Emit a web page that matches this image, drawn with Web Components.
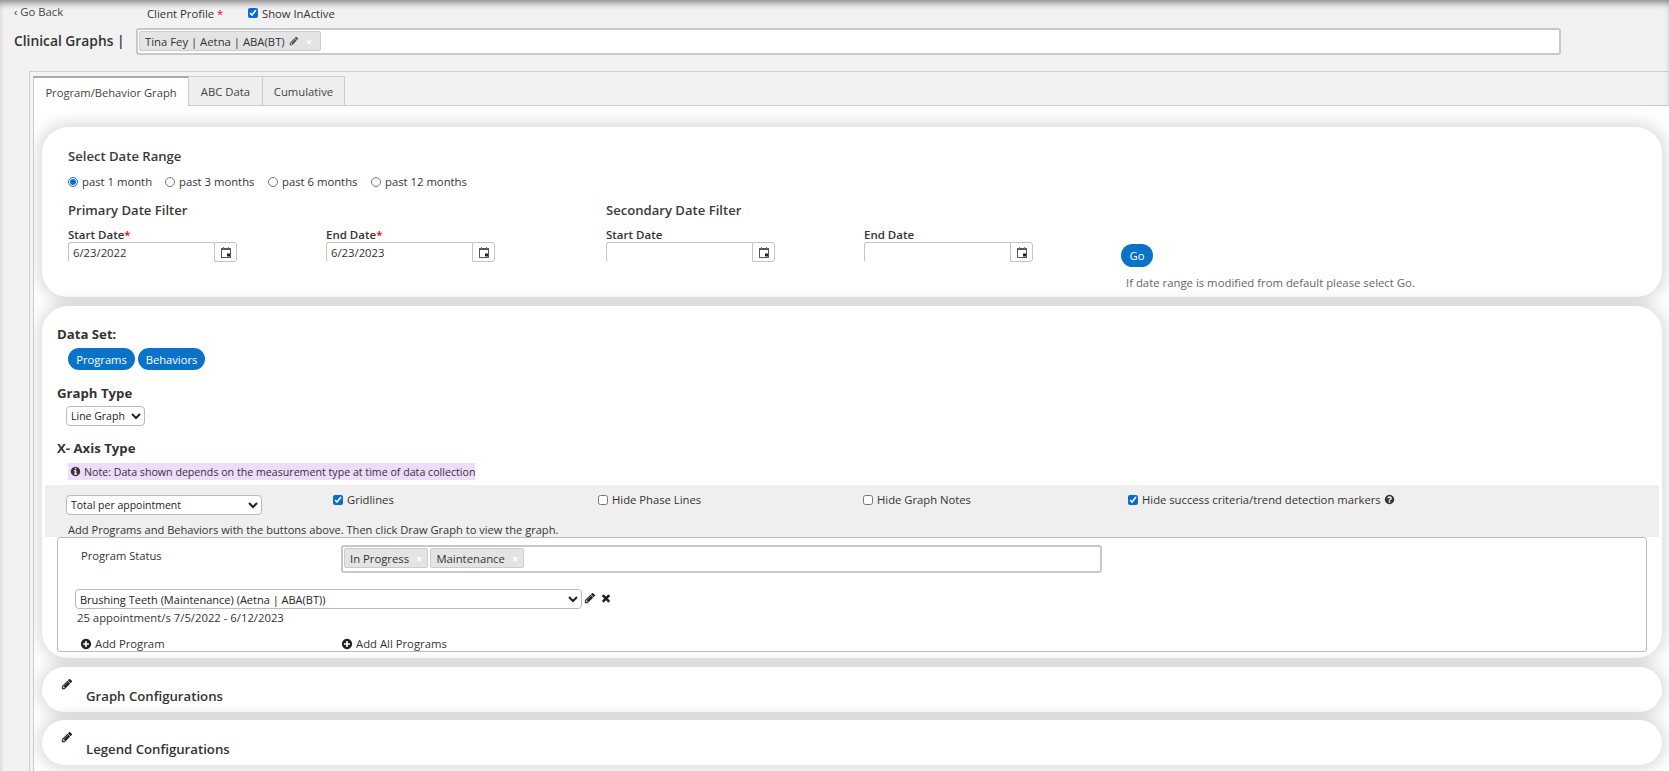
<!DOCTYPE html>
<html><head><meta charset="utf-8">
<style>
html,body{margin:0;height:771px;overflow:hidden}
body{background:#f2f2f2;font-family:"Open Sans","Liberation Sans",sans-serif;color:#333;font-size:11.3px;box-shadow:inset 0 6px 7px -3px rgba(0,0,0,.45)}
</style></head><body>
<clinical-page></clinical-page>
<script>
const P={
pencil:'M491 1536l91-91-235-235-91 91v107h128v128h107zm523-928q0-22-22-22-10 0-17 7l-542 542q-7 7-7 17 0 22 22 22 10 0 17-7l542-542q7-7 7-17zm-54-192l416 416-832 832h-416v-416zm683 96q0 53-37 90l-166 166-416-416 166-165q36-38 90-38 53 0 91 38l235 234q37 39 37 91z',
times:'M1490 1322q0 40-28 68l-136 136q-28 28-68 28t-68-28l-294-294-294 294q-28 28-68 28t-68-28l-136-136q-28-28-28-68t28-68l294-294-294-294q-28-28-28-68t28-68l136-136q28-28 68-28t68 28l294 294 294-294q28-28 68-28t68 28l136 136q28 28 28 68t-28 68l-294 294 294 294q28 28 28 68z',
plus:'M1344 960v-128q0-26-19-45t-45-19h-256v-256q0-26-19-45t-45-19h-128q-26 0-45 19t-19 45v256h-256q-26 0-45 19t-19 45v128q0 26 19 45t45 19h256v256q0 26 19 45t45 19h128q26 0 45-19t19-45v-256h256q26 0 45-19t19-45zm320-64q0 209-103 385.5t-279.5 279.5-385.5 103-385.5-103-279.5-279.5-103-385.5 103-385.5 279.5-279.5 385.5-103 385.5 103 279.5 279.5 103 385.5z',
info:'M1152 1376v-160q0-14-9-23t-23-9h-96v-512q0-14-9-23t-23-9h-320q-14 0-23 9t-9 23v160q0 14 9 23t23 9h96v320h-96q-14 0-23 9t-9 23v160q0 14 9 23t23 9h448q14 0 23-9t9-23zm-128-896v-160q0-14-9-23t-23-9h-192q-14 0-23 9t-9 23v160q0 14 9 23t23 9h192q14 0 23-9t9-23zm640 416q0 209-103 385.5t-279.5 279.5-385.5 103-385.5-103-279.5-279.5-103-385.5 103-385.5 279.5-279.5 385.5-103 385.5 103 279.5 279.5 103 385.5z',
question:'M1024 1376v-192q0-14-9-23t-23-9h-192q-14 0-23 9t-9 23v192q0 14 9 23t23 9h192q14 0 23-9t9-23zm256-672q0-88-55.5-163t-138.5-116-170-41q-243 0-371 213-15 24 8 42l132 100q7 6 19 6 16 0 25-12 53-68 86-92 34-24 86-24 48 0 85.5 26t37.5 59q0 38-20 61t-68 45q-63 28-115.5 86.5t-52.5 125.5v36q0 14 9 23t23 9h192q14 0 23-9t9-23q0-19 21.5-49.5t54.5-49.5q32-18 49-28.5t46-35 44.5-48 28-60.5 12.5-81zm384 192q0 209-103 385.5t-279.5 279.5-385.5 103-385.5-103-279.5-279.5-103-385.5 103-385.5 279.5-279.5 385.5-103 385.5 103 279.5 279.5 103 385.5z'
};
class El extends HTMLElement{
  constructor(){super();this.attachShadow({mode:'open'});}
  connectedCallback(){this.shadowRoot.innerHTML=this.render();}
  a(n,d=''){return this.hasAttribute(n)?this.getAttribute(n):d;}
}
function def(n,f){customElements.define(n,class extends El{render(){return f(this);}});}

def('fa-icon',e=>`<style>:host{display:inline-flex;flex:none;color:inherit}svg{display:block}</style>
<svg width="${e.a('size',11)}" height="${e.a('size',11)}" viewBox="0 0 1792 1792" fill="currentColor"><path d="${P[e.a('name')]}"/></svg>`);

def('cal-icon',()=>`<style>:host{display:block}svg{display:block}</style>
<svg width="12" height="12" viewBox="0 0 12 12"><rect x="1.5" y="2.5" width="9" height="9" fill="#fff" stroke="#555"/><rect x="1" y="2" width="10" height="2" fill="#555"/><rect x="3" y="1" width="1" height="2" fill="#777"/><rect x="8" y="1" width="1" height="2" fill="#777"/><rect x="7" y="7.5" width="3" height="3" fill="#222"/></svg>`);

def('ui-check',e=>`<style>:host{display:inline-flex;align-items:center;font-size:11.25px;color:#333;white-space:nowrap}
input{margin:0 4px 0 0;width:10px;height:10px;accent-color:#0a6ccb}</style>
<input type="checkbox" ${e.hasAttribute('checked')?'checked':''}><slot></slot>`);

def('ui-radio',e=>`<style>:host{display:inline-flex;align-items:center;font-size:11.3px;color:#333;white-space:nowrap}
input{margin:1px 4px 0 0;width:10px;height:10px;accent-color:#0a6ccb}</style>
<input type="radio" name="r" ${e.hasAttribute('checked')?'checked':''}><slot></slot>`);

def('ui-tag',e=>`<style>:host{display:inline-flex;align-items:center;height:20px;box-sizing:border-box;border:1px solid #ccc;border-radius:2px;background:#e4e4e4;padding:0 5px;font-size:11.3px;color:#333;white-space:nowrap;gap:4px}
.x{color:#fff;font-weight:700;font-size:11px;margin-left:${e.a('xgap',3)}px}</style><slot></slot><span class="x">×</span>`);

def('pill-btn',()=>`<style>:host{display:inline-flex;align-items:center;justify-content:center;height:22px;padding:0 9px;background:#0a73c9;color:#fff;border-radius:11px;font-size:11.2px;white-space:nowrap}</style><slot></slot>`);

def('date-field',e=>`<style>:host{display:block}
label{display:block;font-weight:600;font-size:11.5px;line-height:16px;color:#333;position:relative;top:1px}
i{color:#e00;font-style:normal}
.row{display:flex;height:20px;width:169px}
.in{flex:1;border:1px solid #c4c4c4;border-bottom-color:#fff;border-right:0;border-radius:3px 0 0 3px;background:#fff;padding:2px 4px 0;font-size:11.3px;box-sizing:border-box;line-height:16px;color:#333}
.btn{width:23px;box-sizing:border-box;border:1px solid #c4c4c4;border-radius:0 3px 3px 0;background:#fff;display:flex;align-items:center;justify-content:center}</style>
<label>${e.a('label')}${e.hasAttribute('required')?'<i>*</i>':''}</label>
<div class="row"><div class="in">${e.a('value')}</div><div class="btn"><cal-icon></cal-icon></div></div>`);

def('sec-title',()=>`<style>:host{display:block;font-size:13.1px;font-weight:600;color:#3a3a3a;line-height:18px}</style><slot></slot>`);

def('ui-card',()=>`<style>:host{display:block;background:#fff;border-radius:26px;box-shadow:0 0 14px 5px rgba(0,0,0,.13);box-sizing:border-box;position:relative}</style><slot></slot>`);

def('tab-bar',()=>`<style>:host{display:flex;margin-left:3px;border-bottom:1px solid #ccc;height:29px;box-sizing:content-box}
span{display:flex;align-items:center;justify-content:center;height:29px;box-sizing:border-box;border:1px solid #ccc;border-bottom:0;font-size:11.3px;color:#444;background:#eee;margin-left:-1px}
.on{background:#fff;width:156px;height:30px;border-top:2px solid #aaa;margin-left:0;position:relative;z-index:1;font-size:11.2px}
</style><span class="on">Program/Behavior Graph</span><span style="width:75px">ABC Data</span><span style="width:83px">Cumulative</span>`);

def('app-header',()=>`<style>:host{display:block;height:71px;box-sizing:border-box;padding-top:5px}
.r1{display:flex;height:18px;align-items:flex-start;font-size:11.3px}
.back{width:147px;padding-left:14px;box-sizing:border-box;line-height:14px;font-size:11.3px;color:#444;white-space:nowrap}
.cp{width:101px;line-height:18px;white-space:nowrap}.cp i{color:#e00;font-style:normal}
ui-check{height:16px}
.r2{display:flex;align-items:center;margin-top:5px;height:27px}
h1{margin:-2px 13px 0 14px;width:109px;font-size:13.8px;font-weight:600;white-space:nowrap;color:#333}
.box{flex:none;width:1425px;height:27px;box-sizing:border-box;border:2px solid #c8c8c8;border-radius:3px;background:#fff;padding:1px;display:flex}
ui-tag{width:182px;justify-content:flex-start}
ui-tag fa-icon{color:#555}</style>
<div class="r1"><div class="back">‹ Go Back</div><div class="cp">Client Profile <i>*</i></div><ui-check checked>Show InActive</ui-check></div>
<div class="r2"><h1>Clinical Graphs |</h1><div class="box"><ui-tag xgap="3">Tina Fey | Aetna | ABA(BT) <fa-icon name="pencil" size="10"></fa-icon></ui-tag></div></div>`);

def('date-card',()=>`<style>:host{display:block}
ui-card{height:170px;padding:20px 0 0 26px}
.radios{display:flex;margin-top:8px;height:16px}
.radios ui-radio{width:103px}
.radios ui-radio:first-child{width:97px}
.grid{display:grid;grid-template-columns:258px 280px 258px 257px auto;margin-top:12px}
.t{grid-column:span 2}
.t2{grid-column:span 3}
.f{margin-top:7px}
.go{margin-top:0;position:relative}
.go pill-btn{margin-top:25px;height:23px;width:32px;padding:0;border-radius:12px}
.hint{margin:9px 0 0 5px;font-size:11.35px;color:#666;line-height:14px;white-space:nowrap}
</style><ui-card>
<sec-title>Select Date Range</sec-title>
<div class="radios"><ui-radio checked>past 1 month</ui-radio><ui-radio>past 3 months</ui-radio><ui-radio>past 6 months</ui-radio><ui-radio>past 12 months</ui-radio></div>
<div class="grid"><sec-title class="t">Primary Date Filter</sec-title><sec-title class="t2">Secondary Date Filter</sec-title>
<date-field class="f" label="Start Date" required value="6/23/2022"></date-field>
<date-field class="f" label="End Date" required value="6/23/2023"></date-field>
<date-field class="f" label="Start Date"></date-field>
<date-field class="f" label="End Date"></date-field>
<div class="go"><pill-btn>Go</pill-btn><div class="hint">If date range is modified from default please select Go.</div></div></div>
</ui-card>`);

def('data-card',()=>`<style>:host{display:block;margin-top:9px}
ui-card{height:352px;padding:19px 15px 0}
h3{margin:0;font-size:13.2px;font-weight:700;line-height:18px;color:#333}
.ind{margin-left:11px}
.btns{display:flex;gap:3px;margin-top:5px;height:22px}
.btns pill-btn{width:67px;padding:0;box-sizing:border-box}
select{font-family:inherit;font-size:10.5px;color:#222;background:#fff;border:1px solid #bbb;border-radius:4px;height:20px;padding:0;display:block}
.note{display:inline-flex;align-items:center;gap:3px;background:#efdcfa;height:17px;font-size:10.65px;color:#333;width:407px;box-sizing:border-box;white-space:nowrap;padding-left:2px}
.grey{margin:5px -12px 0;background:#efefef;height:52px;padding:10px 0 0 21px;box-sizing:border-box;position:relative}
.grow{display:grid;grid-template-columns:267px 265px 265px auto;align-items:start}
.grow ui-check{margin-top:-3px}
.msg{font-size:11.1px;line-height:14px;margin:8px 0 0 2px;white-space:nowrap}
.box{height:115px;border:1px solid #bbb;border-radius:3px;box-sizing:border-box;overflow:hidden;padding:7px 0 0 0}
.st{display:flex}
.st span{width:283px;padding:3px 0 0 23px;box-sizing:border-box;line-height:16px;font-size:11.2px}
.ms{width:761px;height:28px;box-sizing:border-box;border:2px solid #c8c8c8;border-radius:3px;padding:1px;display:flex;gap:2px}
.prog{display:flex;align-items:center;margin:16px 0 0 17px;height:20px}
.prog select{width:507px;font-size:11px}
.prog fa-icon{margin:0 0 3px 2px;color:#222}
.prog .x{margin-left:4px}
.ap{margin:1px 0 0 19px;line-height:16px;font-size:11.3px;color:#333}
.add{display:flex;margin:10px 0 0 22px;font-size:11.3px;line-height:16px;height:16px}
.add div{display:flex;align-items:center;gap:3px;width:261px;white-space:nowrap}
.add fa-icon{color:#222}
</style><ui-card>
<h3>Data Set:</h3>
<div class="btns ind"><pill-btn>Programs</pill-btn><pill-btn>Behaviors</pill-btn></div>
<h3 style="margin-top:14px">Graph Type</h3>
<select style="width:79px;margin:4px 0 0 9px"><option>Line Graph</option></select>
<h3 style="margin-top:13px">X- Axis Type</h3>
<div class="ind" style="margin-top:6px;height:17px"><span class="note"><fa-icon name="info" size="11"></fa-icon>Note: Data shown depends on the measurement type at time of data collection</span></div>
<div class="grey"><div class="grow"><select style="width:196px"><option>Total per appointment</option></select>
<ui-check checked>Gridlines</ui-check><ui-check>Hide Phase Lines</ui-check><ui-check>Hide Graph Notes</ui-check></div>
<ui-check checked style="position:absolute;left:1083px;top:7px">Hide success criteria/trend detection markers&nbsp;<fa-icon name="question" size="11"></fa-icon></ui-check>
<div class="msg">Add Programs and Behaviors with the buttons above. Then click Draw Graph to view the graph.</div></div>
<div class="box">
<div class="st"><span>Program Status</span><div class="ms"><ui-tag>In Progress</ui-tag><ui-tag>Maintenance</ui-tag></div></div>
<div class="prog"><select><option>Brushing Teeth (Maintenance) (Aetna | ABA(BT))</option></select><fa-icon name="pencil" size="12"></fa-icon><fa-icon class="x" name="times" size="12"></fa-icon></div>
<div class="ap">25 appointment/s 7/5/2022 - 6/12/2023</div>
<div class="add"><div><fa-icon name="plus" size="12"></fa-icon>Add Program</div><div><fa-icon name="plus" size="12"></fa-icon>Add All Programs</div></div>
</div></ui-card>`);

def('collapse-card',e=>`<style>:host{display:block;margin-top:${e.a('gap',9)}px}
ui-card{height:45px}
.in{display:flex;height:45px;padding:0 0 0 19px;position:relative}
fa-icon{color:#222;margin-top:11px}
b{font-size:13.2px;font-weight:600;color:#333;margin:20px 0 0 13px;line-height:18px;white-space:nowrap}</style>
<ui-card><div class="in"><fa-icon name="pencil" size="12"></fa-icon><b>${e.a('title')}</b></div></ui-card>`);

def('clinical-page',()=>`<style>:host{display:block}
.outer{margin-left:29px;border-top:1px solid #ccc;border-left:1px solid #ccc;padding-top:4px;height:700px;box-sizing:border-box}
.pane{margin-left:3px;border-left:1px solid #ccc;background:#fff;padding:21px 7px 0 8px;height:666px;box-sizing:border-box;overflow:hidden}
</style>
<app-header></app-header>
<div class="outer"><tab-bar></tab-bar>
<div class="pane"><date-card></date-card><data-card></data-card>
<collapse-card title="Graph Configurations"></collapse-card>
<collapse-card gap="8" title="Legend Configurations"></collapse-card></div></div>`);
</script>
</body></html>
